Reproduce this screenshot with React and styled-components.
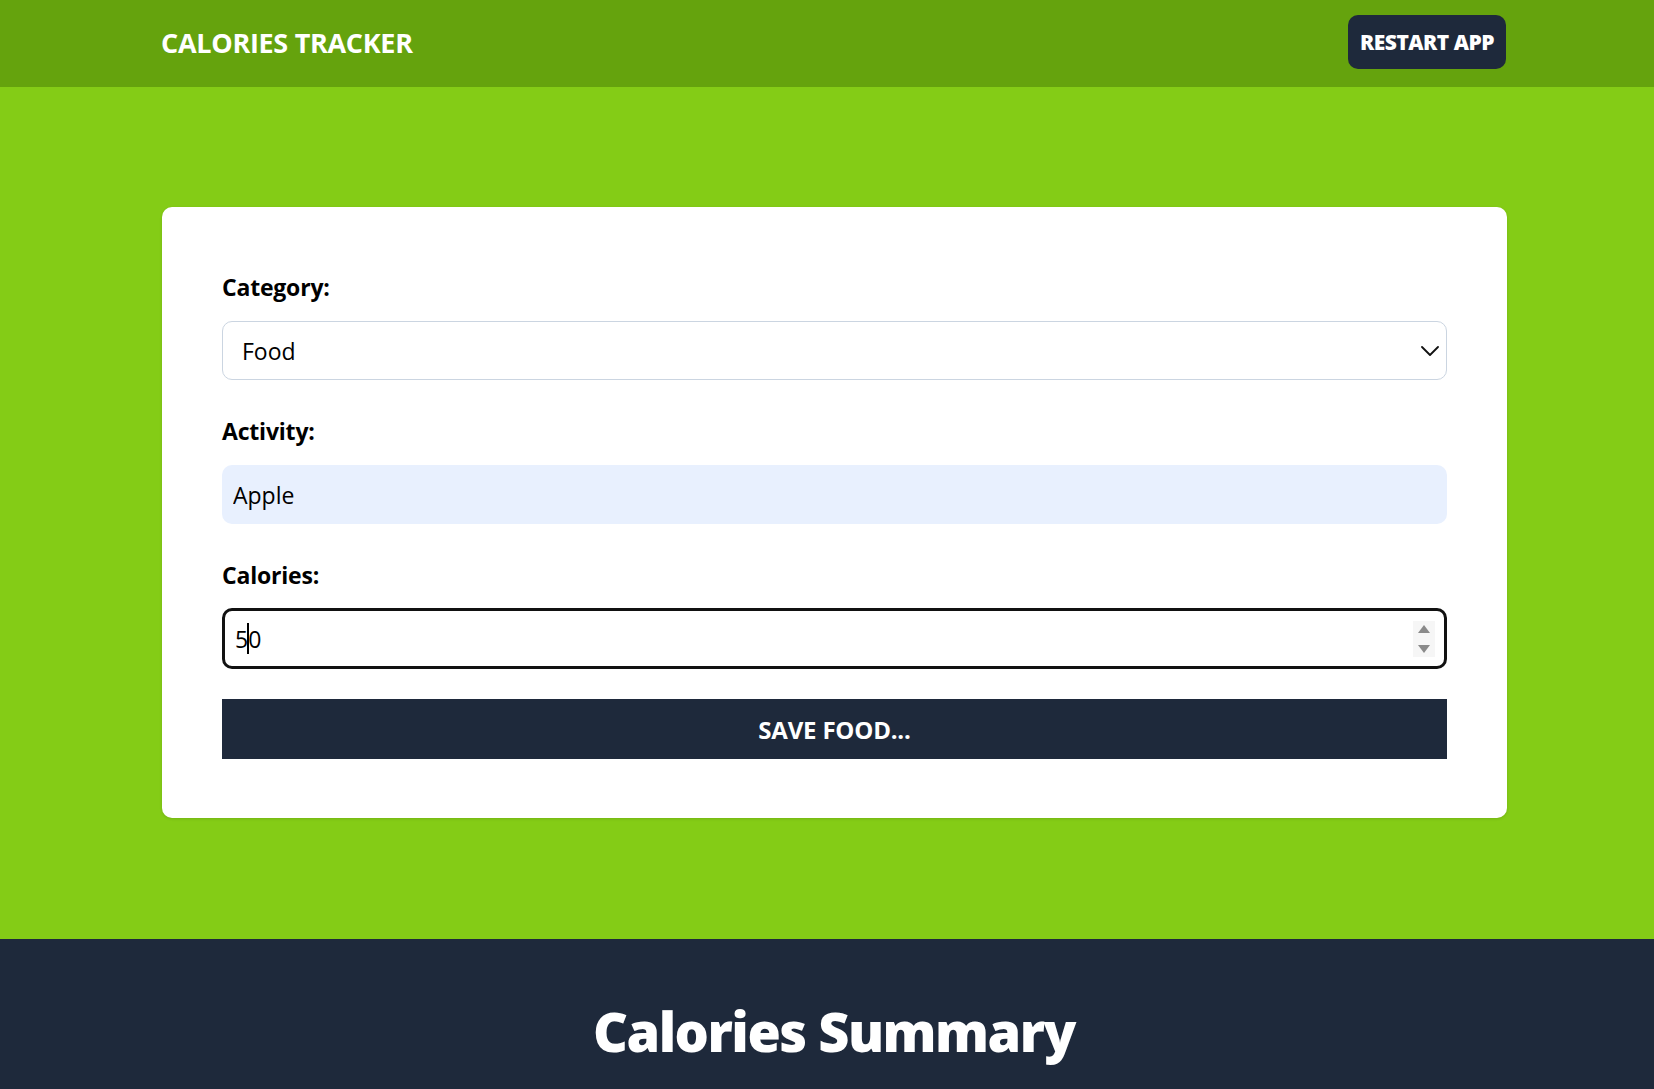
import React from 'react'
import styled, { createGlobalStyle } from 'styled-components'

const GlobalStyle = createGlobalStyle`
  * { box-sizing: border-box; }
  body {
    margin: 0;
    font-family: "Open Sans", "Noto Sans", sans-serif;
    background-color: #1e293b;
    color: #000;
  }
`

export default function App() {
  return (
    <>
      <GlobalStyle />
      <Header>
        <Bar>
          <Title>Calories Tracker</Title>
          <RestartButton>Restart App</RestartButton>
        </Bar>
      </Header>

      <Main>
        <Card>
          <Form onSubmit={(e) => e.preventDefault()}>
            <Field>
              <Label htmlFor="category">Category:</Label>
              <SelectWrap>
                <Select id="category" defaultValue="1">
                  <option value="1">Food</option>
                  <option value="2">Exercise</option>
                </Select>
                <Chevron viewBox="0 0 18 10" fill="none">
                  <path d="M1 1l8 8 8-8" stroke="#111" strokeWidth="1.8" strokeLinecap="round" strokeLinejoin="round" />
                </Chevron>
              </SelectWrap>
            </Field>

            <Field>
              <Label htmlFor="name">Activity:</Label>
              <Input id="name" type="text" defaultValue="Apple" $autofill />
            </Field>

            <Field>
              <Label htmlFor="calories">Calories:</Label>
              <NumberWrap>
                <Input id="calories" type="number" defaultValue="50" $focused />
                <Caret />
                <Spinner>
                  <svg width="12" height="8" viewBox="0 0 12 8"><path d="M6 0l6 8H0z" fill="#8a8a8a" /></svg>
                  <svg width="12" height="8" viewBox="0 0 12 8"><path d="M0 0h12L6 8z" fill="#8a8a8a" /></svg>
                </Spinner>
              </NumberWrap>
            </Field>

            <SaveButton type="submit">Save Food...</SaveButton>
          </Form>
        </Card>
      </Main>

      <Summary>
        <SummaryTitle>Calories Summary</SummaryTitle>
      </Summary>
    </>
  )
}

const Header = styled.header`
  background-color: #65a30d;
  height: 87px;
`

const Bar = styled.div`
  width: 1344px;
  margin-left: 162px;
  height: 100%;
  display: flex;
  align-items: center;
  justify-content: space-between;
`

const Title = styled.h1`
  margin: 0 0 2px -1px;
  font-size: 27px;
  font-weight: 700;
  text-transform: uppercase;
  color: #fff;
  letter-spacing: -0.3px;
`

const RestartButton = styled.button`
  width: 158px;
  height: 54px;
  margin-top: -3px;
  border: none;
  border-radius: 10px;
  background-color: #1e293b;
  color: #fff;
  font-family: inherit;
  font-size: 21px;
  font-weight: 800;
  text-transform: uppercase;
  letter-spacing: -0.5px;
  cursor: pointer;
`

const Main = styled.main`
  background-color: #84cc16;
  padding: 120px 0 121px;
`

const Card = styled.section`
  width: 1345px;
  margin-left: 162px;
  background-color: #fff;
  border-radius: 10px;
  box-shadow: 0 1px 3px rgba(0, 0, 0, 0.12);
  padding: 60px 60px 59px;
`

const Form = styled.form`
  display: flex;
  flex-direction: column;
  gap: 31px;
`

const Field = styled.div`
  display: grid;
  gap: 16px;
`

const Label = styled.label`
  padding-top: 2px;
  font-size: 23px;
  line-height: 36px;
  font-weight: 700;
  letter-spacing: -0.2px;
`

const SelectWrap = styled.div`
  position: relative;
`

const Select = styled.select`
  width: 100%;
  height: 59px;
  appearance: none;
  border: 1px solid #cbd5e1;
  border-radius: 10px;
  background-color: #fff;
  padding: 0 19px;
  font-family: inherit;
  font-size: 23px;
  color: #000;
`

const Chevron = styled.svg`
  position: absolute;
  right: 8px;
  top: 25px;
  width: 18px;
  height: 10px;
  pointer-events: none;
`

const NumberWrap = styled.div`
  position: relative;
`

const Input = styled.input`
  width: 100%;
  height: ${(p) => (p.$focused ? '61px' : '59px')};
  margin: ${(p) => (p.$focused ? '-1px 0' : '0')};
  border: ${(p) => (p.$focused ? '3px solid #111' : '1px solid transparent')};
  border-radius: 10px;
  background-color: ${(p) => (p.$autofill ? '#e8f0fe' : '#fff')};
  padding: 0 10px;
  font-family: inherit;
  font-size: 23px;
  color: #000;
  outline: none;
  -moz-appearance: textfield;

  &::-webkit-inner-spin-button,
  &::-webkit-outer-spin-button {
    -webkit-appearance: none;
    margin: 0;
  }
`

const Caret = styled.span`
  position: absolute;
  left: 25px;
  top: 14px;
  width: 1.5px;
  height: 31px;
  background-color: #000;
`

const Spinner = styled.div`
  position: absolute;
  right: 12px;
  top: 12px;
  width: 22px;
  height: 36px;
  background-color: #f6f6f6;
  display: flex;
  flex-direction: column;
  align-items: center;
  justify-content: center;
  gap: 12px;
`

const SaveButton = styled.button`
  height: 60px;
  border: none;
  background-color: #1e293b;
  color: #fff;
  font-family: inherit;
  font-size: 24px;
  font-weight: 700;
  text-transform: uppercase;
  letter-spacing: -0.2px;
  cursor: pointer;
`

const Summary = styled.section`
  background-color: #1e293b;
  min-height: 151px;
  padding: 62px 0 40px 14px;
`

const SummaryTitle = styled.h2`
  margin: 0;
  text-align: center;
  color: #fff;
  font-size: 54px;
  line-height: 60px;
  font-weight: 800;
  letter-spacing: -1.5px;
`
